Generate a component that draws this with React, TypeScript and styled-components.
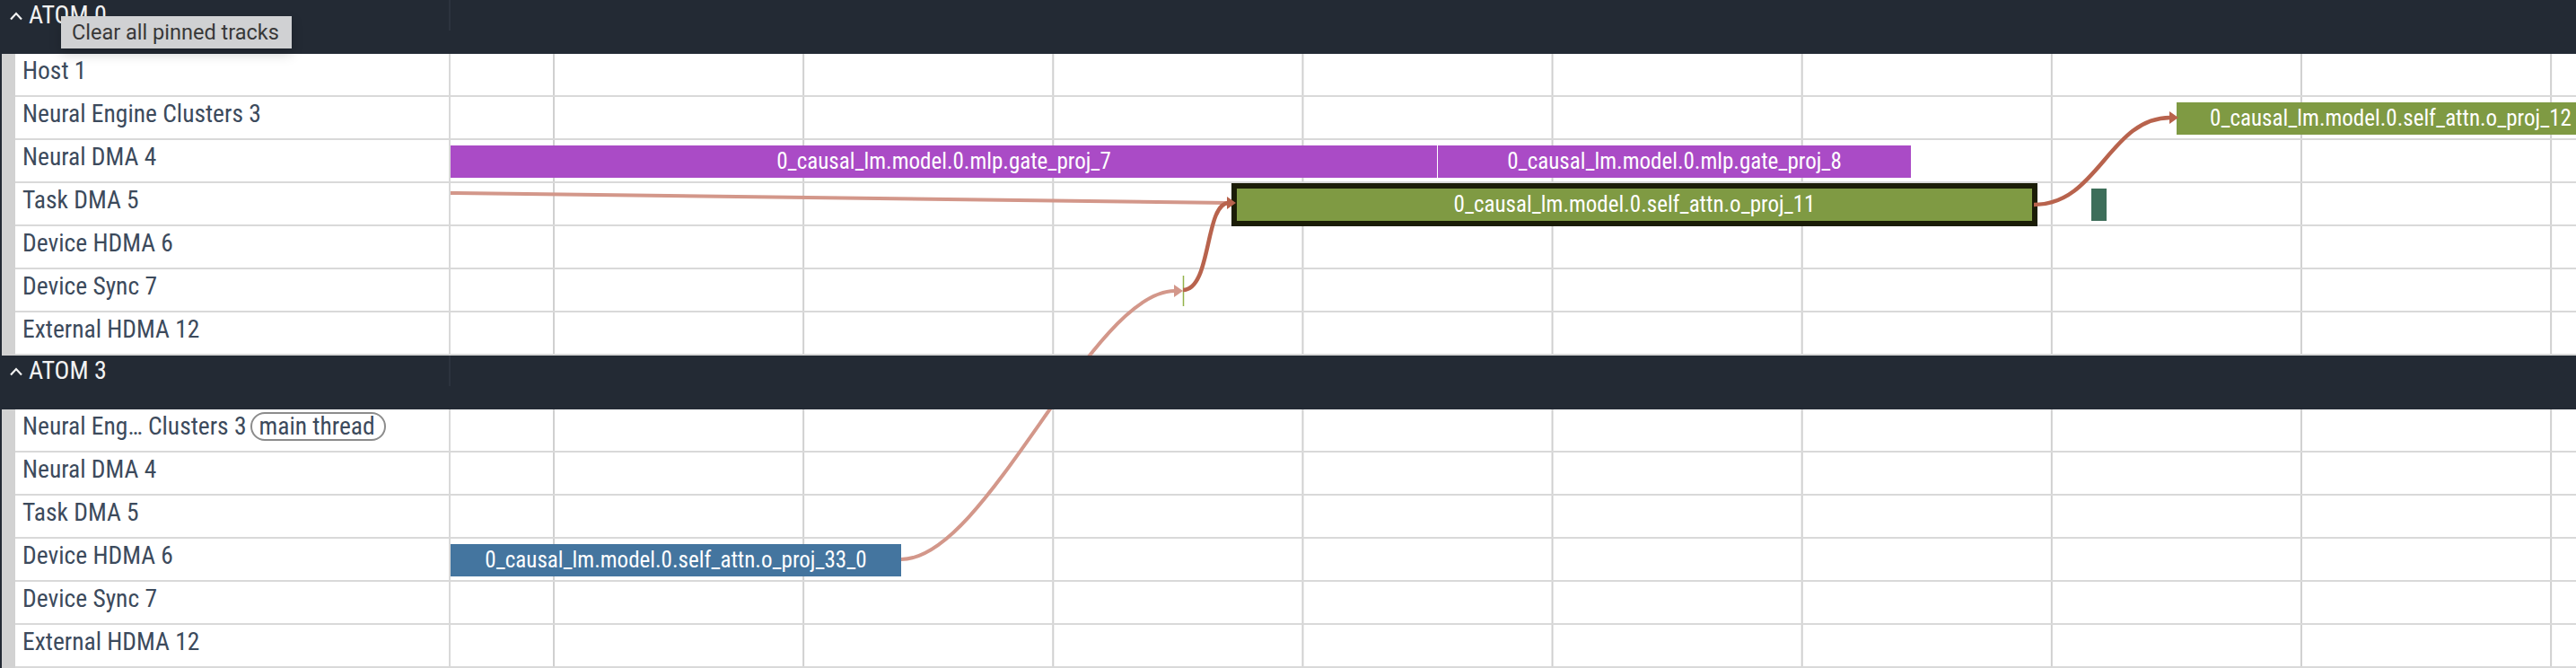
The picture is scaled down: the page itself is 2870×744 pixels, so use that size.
import React from 'react';
import styled, { createGlobalStyle, css } from 'styled-components';

const TRACK_FONT = `"Roboto Condensed", "Liberation Sans Narrow", "DejaVu Sans Condensed", Roboto, sans-serif`;

const colors = {
  header: '#232a34',
  gutter: '#d2d2d2',
  line: '#d9d9d9',
  grid: '#d0d0d0',
  label: '#3c4a5c',
  flow: '#b8634d',
  flowFaded: '#d3978a',
};

type SliceData = { name?: string; left: number; width: number; color: string; selected?: boolean };
type TrackData = { name: string; tag?: string; slices?: SliceData[] };
type GroupData = { title: string; tracks: TrackData[] };

const groups: GroupData[] = [
  {
    title: 'ATOM 0',
    tracks: [
      { name: 'Host 1' },
      {
        name: 'Neural Engine Clusters 3',
        slices: [{ name: '0_causal_lm.model.0.self_attn.o_proj_12', left: 1923, width: 477, color: '#7f9a43' }],
      },
      {
        name: 'Neural DMA 4',
        slices: [
          { name: '0_causal_lm.model.0.mlp.gate_proj_7', left: 0, width: 1099, color: '#aa4bc6' },
          { name: '0_causal_lm.model.0.mlp.gate_proj_8', left: 1100, width: 527, color: '#aa4bc6' },
        ],
      },
      {
        name: 'Task DMA 5',
        slices: [
          { name: '0_causal_lm.model.0.self_attn.o_proj_11', left: 876, width: 886, color: '#7f9a43', selected: true },
          { left: 1828, width: 17, color: '#3d6e5a' },
        ],
      },
      { name: 'Device HDMA 6' },
      { name: 'Device Sync 7' },
      { name: 'External HDMA 12' },
    ],
  },
  {
    title: 'ATOM 3',
    tracks: [
      { name: 'Neural Eng\u2026 Clusters 3', tag: 'main thread' },
      { name: 'Neural DMA 4' },
      { name: 'Task DMA 5' },
      {
        name: 'Device HDMA 6',
        slices: [{ name: '0_causal_lm.model.0.self_attn.o_proj_33_0', left: 0, width: 502, color: '#44759f' }],
      },
      { name: 'Device Sync 7' },
      { name: 'External HDMA 12' },
    ],
  },
];

function Arrow({ x, y, color }: { x: number; y: number; color: string }) {
  return <polygon points={`${x - 10},${y - 7} ${x},${y} ${x - 10},${y + 7}`} fill={color} />;
}

function Flows() {
  return (
    <FlowLayer width={2870} height={744} viewBox="0 0 2870 744">
      <path d="M502 215 L1368 226" stroke={colors.flowFaded} strokeWidth={4} fill="none" />
      <path d="M1004 623 C1100 623, 1215 324, 1309 324" stroke={colors.flowFaded} strokeWidth={4} fill="none" />
      <Arrow x={1318} y={324} color={colors.flowFaded} />
      <line x1={1318.5} y1={307} x2={1318.5} y2={341} stroke="#93b24a" strokeWidth={1.5} />
      <path d="M1318 323 C1350 323, 1342 226, 1369 226" stroke={colors.flow} strokeWidth={4.5} fill="none" />
      <Arrow x={1377} y={226} color={colors.flow} />
      <path d="M2266 228 C2338 228, 2350 131, 2418 131" stroke={colors.flow} strokeWidth={4.5} fill="none" />
      <Arrow x={2427} y={131} color={colors.flow} />
    </FlowLayer>
  );
}

function App() {
  return (
    <>
      <GlobalStyle />
      <Root>
        {groups.map(group => (
          <section key={group.title}>
            <GroupHeader>
              <HeaderTitle>
                <Caret width={14} height={10} viewBox="0 0 14 10">
                  <polyline points="1,8.5 7,2 13,8.5" fill="none" stroke="#f2f2f2" strokeWidth={2.2} />
                </Caret>
                {group.title}
              </HeaderTitle>
              <div />
            </GroupHeader>
            {group.tracks.map((track, i) => (
              <Track key={i}>
                <Gutter />
                <TrackLabel>
                  {track.name}
                  {track.tag && <Tag>{track.tag}</Tag>}
                </TrackLabel>
                <Timeline>
                  {track.slices?.map((s, j) => (
                    <Slice key={j} $color={s.color} $selected={s.selected} style={{ left: s.left, width: s.width }}>
                      {s.name}
                    </Slice>
                  ))}
                </Timeline>
              </Track>
            ))}
          </section>
        ))}
        <Flows />
        <Tooltip>Clear all pinned tracks</Tooltip>
      </Root>
    </>
  );
}

export default App;

const GlobalStyle = createGlobalStyle`
  html, body {
    margin: 0;
    padding: 0;
    background: #fff;
  }
  body {
    width: 2870px;
    height: 744px;
    overflow: hidden;
  }
`;

const Root = styled.div`
  position: relative;
  width: 2870px;
  height: 744px;
  overflow: hidden;
  font-family: ${TRACK_FONT};
`;

const GroupHeader = styled.div`
  position: relative;
  z-index: 2;
  display: grid;
  grid-template-columns: 502px 1fr;
  height: 60px;
  background: ${colors.header};
`;

const HeaderTitle = styled.div`
  display: flex;
  align-items: center;
  gap: 7px;
  height: 34px;
  padding-left: 11px;
  border-right: 2px solid #2c333e;
  color: #f2f2f2;
  font-size: 28px;
  line-height: 34px;
`;

const Caret = styled.svg`
  margin-top: 2px;
`;

const Track = styled.div`
  display: grid;
  grid-template-columns: 17px 485px 1fr;
  height: 48px;
`;

const Gutter = styled.div`
  background: ${colors.gutter};
  border-left: 2px solid ${colors.header};
`;

const TrackLabel = styled.div`
  display: flex;
  align-items: center;
  padding: 0 0 9px 8px;
  background: #fff;
  border-right: 2px solid ${colors.line};
  border-bottom: 2px solid ${colors.line};
  color: ${colors.label};
  font-size: 27.5px;
  white-space: nowrap;
`;

const Tag = styled.span`
  display: inline-flex;
  align-items: center;
  box-sizing: border-box;
  height: 32px;
  margin-left: 4px;
  padding: 0 10px 0 8px;
  border: 2px solid #8c8c8c;
  border-radius: 999px;
  line-height: 28px;
`;

const Timeline = styled.div`
  position: relative;
  background-color: #fff;
  background-image: linear-gradient(to right, ${colors.grid} 2px, transparent 2px);
  background-size: 278.15px 100%;
  background-position: 114px 0;
  border-bottom: 2px solid ${colors.line};
`;

const Slice = styled.div<{ $color: string; $selected?: boolean }>`
  position: absolute;
  top: 6px;
  height: 36px;
  box-sizing: border-box;
  padding: 0 4px;
  background: ${p => p.$color};
  color: #fff;
  font-size: 25px;
  line-height: 36px;
  text-align: center;
  white-space: nowrap;
  overflow: hidden;
  ${p =>
    p.$selected &&
    css`
      outline: 6px solid #1b1d07;
    `}
`;

const FlowLayer = styled.svg`
  position: absolute;
  top: 0;
  left: 0;
  z-index: 1;
  pointer-events: none;
`;

const Tooltip = styled.div`
  position: absolute;
  top: 18px;
  left: 68px;
  z-index: 3;
  height: 36px;
  padding: 0 14px 0 12px;
  background: #d0d1d3;
  color: #383838;
  font-family: Roboto, "Liberation Sans", sans-serif;
  font-size: 23.5px;
  line-height: 36px;
  box-shadow: 0 6px 14px rgba(0, 0, 0, 0.18);
`;
